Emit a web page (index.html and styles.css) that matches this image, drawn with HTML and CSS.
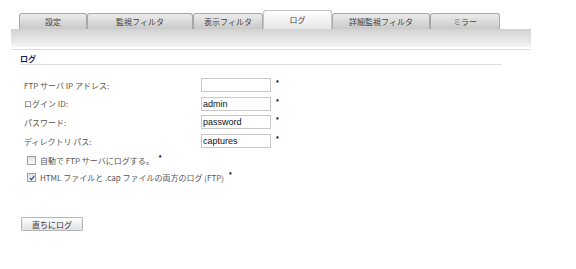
FILE: index.html
```html
<!DOCTYPE html>
<html lang="ja">
<head>
    <meta charset="UTF-8">
    <title>ログ</title>
    <link rel="stylesheet" href="styles.css">
</head>
<body>
    <div class="page">
        <div class="tabs">
            <div class="tab t1">設定</div>
            <div class="tab t2">監視フィルタ</div>
            <div class="tab t3">表示フィルタ</div>
            <div class="tab active t4">ログ</div>
            <div class="tab t5">詳細監視フィルタ</div>
            <div class="tab t6">ミラー</div>
        </div>
        <div class="toolbar"></div>

        <div class="section">
            <h2>ログ</h2>
            <form class="form">
                <div class="row">
                    <label>FTP サーバ IP アドレス:</label>
                    <input type="text" value="">
                    <span class="req">*</span>
                </div>
                <div class="row">
                    <label>ログイン ID:</label>
                    <input type="text" value="admin">
                    <span class="req">*</span>
                </div>
                <div class="row">
                    <label>パスワード:</label>
                    <input type="text" value="password">
                    <span class="req">*</span>
                </div>
                <div class="row">
                    <label>ディレクトリ パス:</label>
                    <input type="text" value="captures">
                    <span class="req">*</span>
                </div>

                <div class="check first">
                    <span class="box"></span>
                    <span>自動で FTP サーバにログする。</span>
                    <span class="req">*</span>
                </div>
                <div class="check">
                    <span class="box">
                        <svg width="6" height="6" viewBox="0 0 6 6"><path d="M0.8 3 L2.4 4.7 L5.3 0.9" fill="none" stroke="#3050a8" stroke-width="1.2"/></svg>
                    </span>
                    <span>HTML ファイルと .cap ファイルの両方のログ (FTP)</span>
                    <span class="req">*</span>
                </div>

                <button type="button" class="btn">直ちにログ</button>
            </form>
        </div>
    </div>
</body>
</html>
```

FILE: styles.css
```css
body {
    margin: 0;
    padding: 0;
    background-color: #fff;
    font-family: "Noto Sans CJK JP", "Liberation Sans", sans-serif;
    font-size: 8px;
    color: #555;
}

.page {
    width: 520px;
    margin-left: 11px;
}

/* タブ */
.tabs {
    display: flex;
    align-items: flex-end;
    height: 29px;
    padding-left: 8px;
}

.tab {
    height: 16px;
    line-height: 15px;
    box-sizing: border-box;
    text-align: center;
    color: #444;
    font-size: 8px;
    border: 1px solid #a8a8a8;
    border-bottom: none;
    border-radius: 3px 3px 0 0;
    background: linear-gradient(#ececec, #c9c9c9);
}

.tab.active {
    height: 19px;
    line-height: 17px;
    background: linear-gradient(#ffffff, #e6e6e6);
    border-color: #c4c4c4;
}

.t1 { width: 68px; }
.t2 { width: 106px; }
.t3 { width: 70px; }
.t4 { width: 69px; }
.t5 { width: 98px; }
.t6 { width: 70px; }

.toolbar {
    height: 18px;
    background: linear-gradient(#d2d2d2, #f4f4f4);
    border-bottom: 2px solid #fff;
    box-shadow: 0 1px 0 #dcdcdc;
    margin-bottom: 3px;
}

/* フォーム */
.section {
    padding-left: 9px;
}

h2 {
    width: 482px;
    margin: 0;
    padding: 1px 0 0;
    line-height: 11px;
    font-size: 8px;
    font-weight: bold;
    color: #1c1c4c;
    border-bottom: 1px solid #dedede;
}

.form {
    padding-top: 11px;
    padding-left: 4px;
}

.row {
    display: grid;
    grid-template-columns: 177px 70px 10px;
    align-items: center;
    height: 18.6px;
    line-height: 11px;
}

.row input {
    height: 14px;
    box-sizing: border-box;
    border: 1px solid #c8c8c8;
    padding: 0 1px;
    margin: 0;
    font-family: "Liberation Sans", sans-serif;
    font-size: 9px;
    color: #111;
}

.req {
    color: #000;
    font-family: "Liberation Sans", sans-serif;
    font-size: 7px;
    font-weight: bold;
    line-height: 7px;
    align-self: start;
    margin-top: 3px;
    margin-left: 5px;
}

.check {
    display: flex;
    align-items: center;
    gap: 4px;
    height: 17px;
    line-height: 11px;
    padding-left: 3px;
}

.check.first {
    margin-top: 2px;
}

.check .req {
    align-self: auto;
    margin-top: -6px;
    margin-left: 1px;
}

.box {
    width: 7px;
    height: 7px;
    border: 1px solid #a0a0a0;
    background: linear-gradient(#e2e2e2, #fafafa);
    display: flex;
    align-items: center;
    justify-content: center;
}

.btn {
    display: block;
    margin-top: 31px;
    margin-left: -3px;
    width: 62px;
    height: 14px;
    padding: 0;
    border: 1px solid #b4b4b4;
    border-radius: 1px;
    background: linear-gradient(#fdfdfd, #e2e2e2);
    font-family: "Noto Sans CJK JP", sans-serif;
    font-size: 8px;
    color: #333;
}
```
